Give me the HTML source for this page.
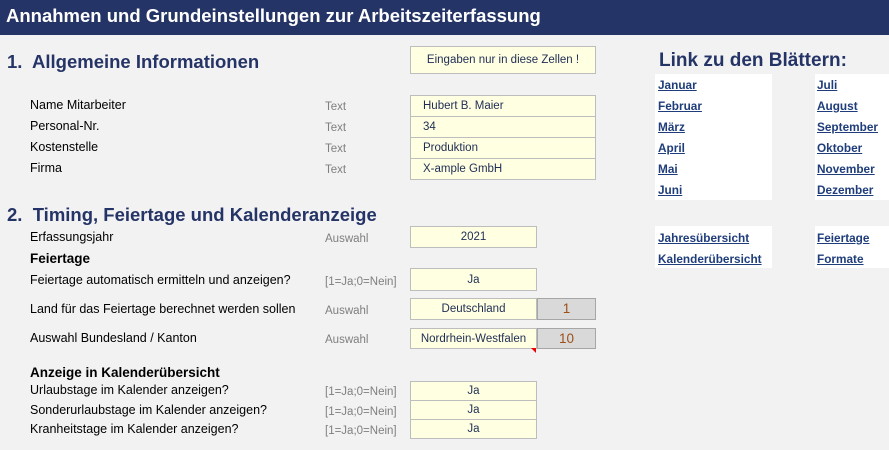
<!DOCTYPE html>
<html><head><meta charset="utf-8"><style>
body{margin:0;width:889px;height:450px;background:#f2f2f2;font-family:"Liberation Sans",Arial,sans-serif;position:relative;overflow:hidden}
.a{position:absolute;white-space:nowrap}
.hdr{left:0;top:0;width:889px;height:35px;background:#253466;color:#fff;font-weight:bold;font-size:18.5px;line-height:32px;padding-left:6px;box-sizing:border-box}
.h1{color:#253466;font-weight:bold;font-size:18.5px}
.l{font-size:12.5px;color:#000}
.g{font-size:11.5px;color:#7f7f7f;margin-top:2px}
.b{background:#ffffe1;border:1px solid #bdbdbd;box-sizing:border-box;font-size:11.5px;color:#1f2d55;line-height:20px}
.c{text-align:center}
.gr{background:#d9d9d9;border:1px solid #a6a6a6;box-sizing:border-box;font-size:13.5px;color:#9c4f1b;text-align:center;line-height:19px}
.w{background:#fff}
.k{font-size:11.8px;font-weight:bold;color:#1f3d7a;text-decoration:underline}
</style></head><body>
<div class="a hdr">Annahmen und Grundeinstellungen zur Arbeitszeiterfassung</div>
<div class="a h1" style="left:7px;top:51px">1.&nbsp; Allgemeine Informationen</div>
<div class="a b c" style="left:410px;top:46px;width:186px;height:28px;line-height:27px">Eingaben nur in diese Zellen !</div>
<div class="a l" style="left:30px;top:98px">Name Mitarbeiter</div>
<div class="a l" style="left:30px;top:119px">Personal-Nr.</div>
<div class="a l" style="left:30px;top:140px">Kostenstelle</div>
<div class="a l" style="left:30px;top:161px">Firma</div>
<div class="a g" style="left:325px;top:99px">Text</div>
<div class="a g" style="left:325px;top:120px">Text</div>
<div class="a g" style="left:325px;top:141px">Text</div>
<div class="a g" style="left:325px;top:162px">Text</div>
<div class="a b" style="left:410px;top:95px;width:186px;height:22px;padding-left:12px">Hubert B. Maier</div>
<div class="a b" style="left:410px;top:116px;width:186px;height:22px;padding-left:12px">34</div>
<div class="a b" style="left:410px;top:137px;width:186px;height:22px;padding-left:12px">Produktion</div>
<div class="a b" style="left:410px;top:158px;width:186px;height:22px;padding-left:12px">X-ample GmbH</div>
<div class="a h1" style="left:7px;top:204px">2.&nbsp; Timing, Feiertage und Kalenderanzeige</div>
<div class="a l" style="left:30px;top:230px">Erfassungsjahr</div>
<div class="a g" style="left:325px;top:231px">Auswahl</div>
<div class="a b c" style="left:410px;top:226px;width:127px;height:22px;line-height:21px">2021</div>
<div class="a l" style="left:30px;top:251px;font-weight:bold;font-size:13.5px">Feiertage</div>
<div class="a l" style="left:30px;top:273px">Feiertage automatisch ermitteln und anzeigen?</div>
<div class="a g" style="left:325px;top:274px">[1=Ja;0=Nein]</div>
<div class="a b c" style="left:410px;top:268px;width:127px;height:23px;line-height:22px">Ja</div>
<div class="a l" style="left:30px;top:302px">Land für das Feiertage berechnet werden sollen</div>
<div class="a g" style="left:325px;top:303px">Auswahl</div>
<div class="a b c" style="left:410px;top:298px;width:127px;height:22px;line-height:21px">Deutschland</div>
<div class="a gr" style="left:537px;top:298px;width:59px;height:22px">1</div>
<div class="a l" style="left:30px;top:331px">Auswahl Bundesland / Kanton</div>
<div class="a g" style="left:325px;top:332px">Auswahl</div>
<div class="a b c" style="left:410px;top:328px;width:127px;height:21px;line-height:20px">Nordrhein-Westfalen</div>
<div class="a gr" style="left:537px;top:328px;width:59px;height:21px">10</div>
<div class="a" style="left:531px;top:348px;width:0;height:0;border-left:5px solid transparent;border-top:5px solid #e00"></div>
<div class="a l" style="left:30px;top:365px;font-weight:bold;font-size:13.5px">Anzeige in Kalenderübersicht</div>
<div class="a l" style="left:30px;top:383px">Urlaubstage im Kalender anzeigen?</div>
<div class="a l" style="left:30px;top:403px">Sonderurlaubstage im Kalender anzeigen?</div>
<div class="a l" style="left:30px;top:422px">Kranheitstage im Kalender anzeigen?</div>
<div class="a g" style="left:325px;top:384px">[1=Ja;0=Nein]</div>
<div class="a g" style="left:325px;top:404px">[1=Ja;0=Nein]</div>
<div class="a g" style="left:325px;top:423px">[1=Ja;0=Nein]</div>
<div class="a b c" style="left:410px;top:381px;width:127px;height:20px;line-height:19px">Ja</div>
<div class="a b c" style="left:410px;top:400px;width:127px;height:20px;line-height:19px">Ja</div>
<div class="a b c" style="left:410px;top:419px;width:127px;height:20px;line-height:19px">Ja</div>
<div class="a h1" style="left:659px;top:50px;font-size:19px">Link zu den Blättern:</div>
<div class="a w" style="left:655px;top:74px;width:117px;height:126px"></div>
<div class="a w" style="left:815px;top:74px;width:74px;height:126px"></div>
<div class="a w" style="left:655px;top:226px;width:117px;height:42px"></div>
<div class="a w" style="left:815px;top:226px;width:74px;height:42px"></div>
<div class="a k" style="left:658px;top:78px">Januar</div>
<div class="a k" style="left:658px;top:99px">Februar</div>
<div class="a k" style="left:658px;top:120px">März</div>
<div class="a k" style="left:658px;top:141px">April</div>
<div class="a k" style="left:658px;top:162px">Mai</div>
<div class="a k" style="left:658px;top:183px">Juni</div>
<div class="a k" style="left:817px;top:78px">Juli</div>
<div class="a k" style="left:817px;top:99px">August</div>
<div class="a k" style="left:817px;top:120px">September</div>
<div class="a k" style="left:817px;top:141px">Oktober</div>
<div class="a k" style="left:817px;top:162px">November</div>
<div class="a k" style="left:817px;top:183px">Dezember</div>
<div class="a k" style="left:658px;top:231px">Jahresübersicht</div>
<div class="a k" style="left:658px;top:252px">Kalenderübersicht</div>
<div class="a k" style="left:817px;top:231px">Feiertage</div>
<div class="a k" style="left:817px;top:252px">Formate</div>
</body></html>
